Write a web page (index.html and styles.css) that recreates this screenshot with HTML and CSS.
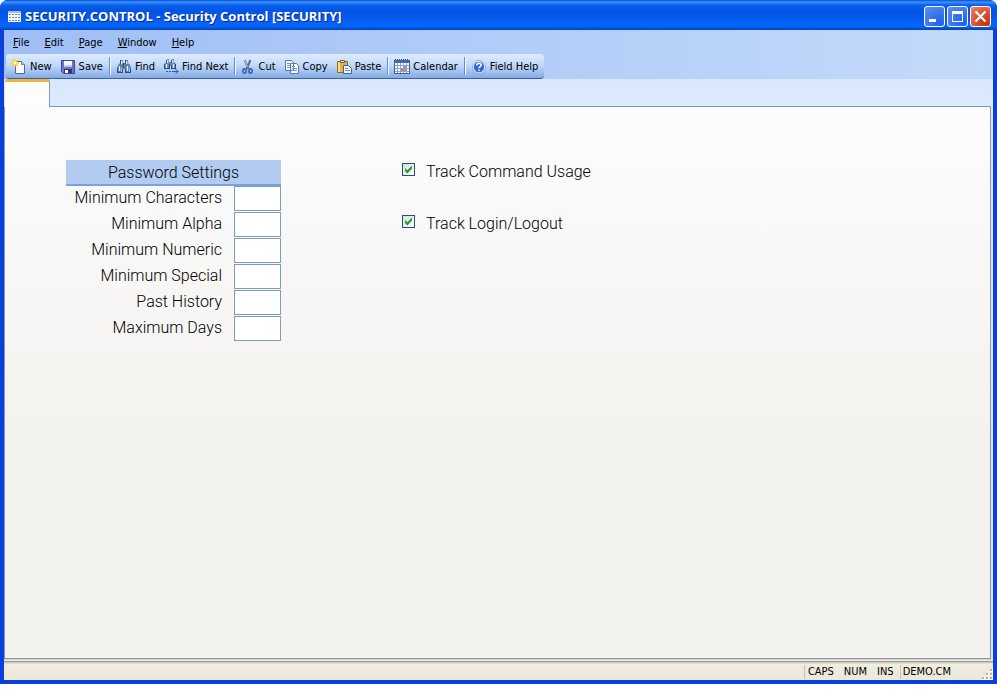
FILE: index.html
```html
<!DOCTYPE html>
<html lang="en">
<head>
<meta charset="utf-8">
<title>SECURITY.CONTROL - Security Control [SECURITY]</title>
<link rel="stylesheet" href="styles.css">
</head>
<body>
<div class="window">
  <header class="titlebar">
    <svg class="app-icon" width="13" height="11" viewBox="0 0 13 11" shape-rendering="crispEdges"><path fill="#f4f6fb" d="M0 0h13v11H0z"/><path fill="#a9b7d8" d="M0 0h13v2H0z"/><path stroke="#7584a8" d="M1 3.500h11M1 6.500h11M1 9.500h11" stroke-dasharray="2 1"/></svg>
    <h1 class="title">SECURITY.CONTROL - Security Control [SECURITY]</h1>
    <div class="controls">
      <button class="control" aria-label="Minimize"><svg width="19" height="19" viewBox="0 0 19 19"><path fill="#fff" d="M4 12h7v3H4z"/></svg></button>
      <button class="control" aria-label="Maximize"><svg width="19" height="19" viewBox="0 0 19 19" shape-rendering="crispEdges"><path fill="#fff" fill-rule="evenodd" d="M4 4h11v11H4zM5 7v7h9V7z"/></svg></button>
      <button class="control close" aria-label="Close"><svg width="19" height="19" viewBox="0 0 19 19"><path stroke="#fff" stroke-width="2.2" d="M4.500 4.500l10 10M14.500 4.500l-10 10"/></svg></button>
    </div>
  </header>
  <div class="frame">
    <div class="bars">
      <nav class="menu">
        <button><u>F</u>ile</button>
        <button><u>E</u>dit</button>
        <button><u>P</u>age</button>
        <button><u>W</u>indow</button>
        <button><u>H</u>elp</button>
      </nav>
      <div class="toolbar" role="toolbar">
        <button><svg width="16" height="16" viewBox="0 0 16 16"><path fill="#fdfeff" stroke="#50668c" d="M4.500 2.500h6l3 3v9h-9z"/><path fill="#c5d5ec" stroke="#50668c" stroke-width=".8" d="M10.500 2.500v3h3"/><path stroke="#f2cf32" stroke-width="1.3" d="M4 0v8M0 4h8M1 1l6 6M7 1L1 7"/><circle cx="4" cy="4" r="1.700" fill="#fff9a8"/></svg>New</button>
        <button><svg width="16" height="16" viewBox="0 0 16 16"><path fill="#6d72cf" stroke="#41459c" d="M1.500 1.500h13v13h-11l-2-2z"/><path fill="#f5f8ff" d="M4 2h8v6H4z"/><path fill="#bfcbe8" d="M4 6h8v2H4z"/><path fill="#303674" d="M4 10h8v4H4z"/><path fill="#fff" d="M5 11h3v3H5z"/></svg>Save</button>
        <span class="sep"></span>
        <button><svg width="16" height="16" viewBox="0 0 16 16"><path fill="#5f7fae" d="M4 1h3v3l1 1V4h1V1h3v3l2 2 1 3v5H9v-4H7v4H1V9l1-3 2-2z"/><path stroke="#304c7c" d="M4.500 1v4M7.500 4v5M9.500 1v4M1.500 9v5M6.500 10v4M9.500 10v4M14.500 9v5M1 13.500h6M9 13.500h6"/><path stroke="#e6effa" stroke-width="1.300" d="M5.700 2v3M10.700 2v3M3.500 7v5M11.500 7v5"/><path fill="#a9c0de" d="M5 9h1v4H5zM13 9h1v4h-1z"/></svg>Find</button>
        <button><svg width="16" height="16" viewBox="0 0 16 16"><path fill="#6787b5" d="M4 0h2v3h3V0h2v3l2 2v5H8V7H7v3H1V5l3-2z"/><path stroke="#304c7c" d="M3.500 1v3M8.500 1v3M1.500 5v4M6.500 5v4M8.500 6v4M12.500 5v4M1 9.500h6M8 9.500h5"/><path stroke="#e6effa" stroke-width="1.200" d="M4.700 1v3M9.700 1v3M3.500 5v4M10.500 5v4"/><path stroke="#1766b5" d="M3 12.500h2M6 12.500h2M9 12.500h6M12.500 10l2.500 2.500-2.500 2.500" fill="none"/></svg>Find Next</button>
        <span class="sep"></span>
        <button><svg width="14" height="16" viewBox="0 0 14 16" fill="none"><path stroke="#5f6d84" stroke-width="2" d="M3.500 1l4 9M9.500 1l-4 9"/><path stroke="#eff5fc" stroke-width=".7" d="M3.500 1l3 7"/><g stroke="#3a65b3" stroke-width="1.700"><ellipse cx="3.500" cy="12" rx="1.600" ry="2.200"/><ellipse cx="9.500" cy="12" rx="1.600" ry="2.200"/></g></svg>Cut</button>
        <button><svg width="16" height="16" viewBox="0 0 16 16"><path fill="#f7fbff" stroke="#5777ad" d="M1.500 1.500h6l2 2v8h-8zM6.500 4.500h6l2 2v8h-8z"/><path stroke="#7896c7" d="M3 4.500h3M3 6.500h3M3 8.500h3M8 7.500h3M8 9.500h5M8 11.500h5"/></svg>Copy</button>
        <button><svg width="16" height="16" viewBox="0 0 16 16"><path fill="#e3b53d" stroke="#8e6b1f" d="M1.500 2.500h10v11h-10z"/><path fill="#f8df86" d="M2 3h2v10H2z"/><path fill="#eee" stroke="#665b45" d="M4.500 3.500v-2h4v2z"/><path fill="#eef5ff" stroke="#496490" d="M7.500 6.500h5l3 3v5h-8z"/><path stroke="#7896c7" d="M9 9.500h3M9 11.500h5"/></svg>Paste</button>
        <span class="sep"></span>
        <button><svg width="16" height="16" viewBox="0 0 16 16" shape-rendering="crispEdges"><path fill="#fff" stroke="#3f619b" d="M.5 1.500h15v13H.5z"/><path fill="#466aa7" d="M1 2h14v2H1z"/><path stroke="#444f66" stroke-dasharray="1 1" d="M1 .5h14"/><path stroke="#87a3ce" d="M3.500 4v10M6.500 4v10M9.500 4v10M12.500 4v10M1 6.500h14M1 9.500h14M1 12.500h14"/><path fill="#e17368" d="M10 7h2v2h-2zM7 10h2v2H7zM10 10h2v2h-2z"/></svg>Calendar</button>
        <span class="sep"></span>
        <button><svg width="16" height="16" viewBox="0 0 16 16" fill="none"><circle cx="8" cy="8" r="6.500" fill="#e7f2ff" stroke="#8cabdf"/><circle cx="8" cy="8" r="5.200" fill="#2f69c9"/><path stroke="#fff" stroke-width="1.500" d="M5.800 6.500c0-3 4.600-2.700 4.400-.2C10.100 7.700 8 7.500 8 9.300M8 10.500V12"/></svg>Field Help</button>
      </div>
    </div>
    <div class="tabs"><button class="tab" aria-label="Page 1"></button></div>
    <div class="body">
      <main class="page">
        <form class="form">
          <fieldset class="settings">
            <legend class="heading">Password Settings</legend>
            <div class="row"><label for="chars">Minimum Characters</label><input id="chars" type="text"></div>
            <div class="row"><label for="alpha">Minimum Alpha</label><input id="alpha" type="text"></div>
            <div class="row"><label for="numeric">Minimum Numeric</label><input id="numeric" type="text"></div>
            <div class="row"><label for="special">Minimum Special</label><input id="special" type="text"></div>
            <div class="row"><label for="history">Past History</label><input id="history" type="text"></div>
            <div class="row"><label for="days">Maximum Days</label><input id="days" type="text"></div>
          </fieldset>
          <div class="tracking">
            <div class="check"><input id="usage" type="checkbox" checked><label for="usage">Track Command Usage</label></div>
            <div class="check"><input id="login" type="checkbox" checked><label for="login">Track Login/Logout</label></div>
          </div>
        </form>
      </main>
    </div>
    <footer class="status">
      <div class="keys"><span>CAPS</span><span>NUM</span><span>INS</span></div>
      <div class="account">DEMO.CM</div>
      <svg class="grip" width="12" height="12" viewBox="0 0 12 12"><path fill="#fff" d="M9 1h3v3H9zM5 5h3v3H5zM9 5h3v3H9zM1 9h3v3H1zM5 9h3v3H5zM9 9h3v3H9z"/><path fill="#b8b4a3" d="M9 1h2v2H9zM5 5h2v2H5zM9 5h2v2H9zM1 9h2v2H1zM5 9h2v2H5zM9 9h2v2H9z"/></svg>
    </footer>
  </div>
</div>
</body>
</html>
```
FILE: styles.css
```css
* { box-sizing: border-box; }
body {
  margin: 0;
  background: #fff;
  color: #000;
  font: 11px/14px "DejaVu Sans Condensed", "Noto Sans", sans-serif;
}
button { border: 0; padding: 0; background: none; color: inherit; font: inherit; }
svg { flex: none; display: block; }

.window {
  display: flex;
  flex-direction: column;
  height: calc(100vh - 5px);
  border-radius: 8px 8px 0 0;
  overflow: hidden;
  background: #0831d9;
}
.titlebar {
  flex: none;
  display: flex;
  align-items: center;
  gap: 4px;
  height: 30px;
  padding: 2px 6px 0 8px;
  background: linear-gradient(#0a4bd0 0, #3b93ff 2px, #0a62ee 5px, #0355e3 10px, #0458ea 18px, #0566fc 24px, #0461f4 27px, #0240b8 30px);
}
.title {
  flex: 1;
  margin: 0;
  color: #fff;
  font: bold 13px/18px "Open Sans", "Noto Sans", sans-serif;
  text-shadow: 1px 1px 0 #0a2a8c;
  white-space: nowrap;
}
.controls { display: flex; gap: 2px; }
.control {
  width: 21px;
  height: 21px;
  border: 1px solid #fff;
  border-radius: 3px;
  background: radial-gradient(circle at 80% 85%, #1f62f0, #3c78ee 50%, #5c90f4);
}
.close { background: radial-gradient(circle at 80% 85%, #c9340c, #dd5230 50%, #ea8a70); }

.frame {
  flex: 1;
  min-height: 0;
  display: flex;
  flex-direction: column;
  border: solid #0a3fdc;
  border-width: 0 4px 4px;
}
.bars { flex: none; height: 49px; background: linear-gradient(90deg, #9ebef5, #c4dafa); }
.menu { display: flex; gap: 15px; height: 24px; padding: 2px 0 0 9px; }
.toolbar {
  display: flex;
  align-items: center;
  width: max-content;
  height: 25px;
  margin-left: 2px;
  padding: 0 2px 0 1px;
  border-bottom: 1px solid #3b619c;
  border-radius: 3px 4px 4px 3px;
  background: linear-gradient(#ddecfe, #c4dafa 45%, #84aae6);
}
.toolbar button { display: flex; align-items: center; gap: 3px; height: 24px; padding: 1px 4px 0; }
.sep { width: 2px; height: 18px; margin: 0 1px 0 2px; border-left: 1px solid #6a8ccb; border-right: 1px solid #f1f9ff; }

.tabs { flex: none; display: flex; height: 28px; padding-left: 1px; background: linear-gradient(#d8e7fa, #dcebfc); }
.tabs::after { content: ""; flex: 1; border-bottom: 1px solid #8798ac; margin-right: 2px; }
.tab { width: 45px; border-top: 3px solid #f0b440; border-right: 1px solid #8798ac; border-radius: 3px 2px 0 0; background: #fdfdfe; }

.body { flex: 1; min-height: 0; display: flex; padding-right: 2px; background: #dfe6ee; }
.page {
  flex: 1;
  padding: 53px 61px 0;
  border: 1px solid #8798ac;
  border-width: 0 1px 1px;
  background: linear-gradient(#fcfcfe, #f3f2ee 330px);
  font: 300 16px/24px Roboto, sans-serif;
}
.form { display: flex; align-items: flex-start; gap: 121px; white-space: nowrap; }
.settings { width: 215px; margin: 0; padding: 0; border: 0; }
.heading {
  width: 100%;
  height: 26px;
  padding: 1px 0 0;
  border-bottom: 2px solid #7f9fdb;
  background: #b1cbf1;
  text-align: center;
}
.row { display: flex; justify-content: flex-end; gap: 12px; height: 26px; }
.row input { width: 47px; height: 25px; padding: 0 4px; border: 1px solid #7f9db9; background: #fff; font: inherit; }
.tracking { display: grid; gap: 28px; }
.check { display: flex; gap: 11px; }
.check input {
  appearance: none;
  width: 13px;
  height: 13px;
  margin: 3px 0 0;
  border: 1px solid #1c5180;
  background: linear-gradient(135deg, #dcdcd7, #fff);
}
.check input:checked::before {
  content: "";
  display: block;
  width: 11px;
  height: 11px;
  background: #21a121;
  clip-path: polygon(18% 36%, 40% 56%, 82% 14%, 82% 42%, 40% 86%, 18% 64%);
}

.status {
  flex: none;
  display: flex;
  align-items: center;
  justify-content: flex-end;
  height: 21px;
  padding: 4px 0 0;
  border-top: 1px solid #d5d2c8;
  background: linear-gradient(#f1efe5 0 1px, #9c998f 1px 2px, #d0cdc0 2px 3px, #f0eee2 4px, #ece9d8 16px);
}
.keys { display: flex; gap: 10px; padding: 0 6px 0 3px; border-left: 1px solid #c5c2b2; }
.account { padding: 0 30px 0 2px; border-left: 1px solid #c5c2b2; }
.grip { align-self: flex-end; }
```
